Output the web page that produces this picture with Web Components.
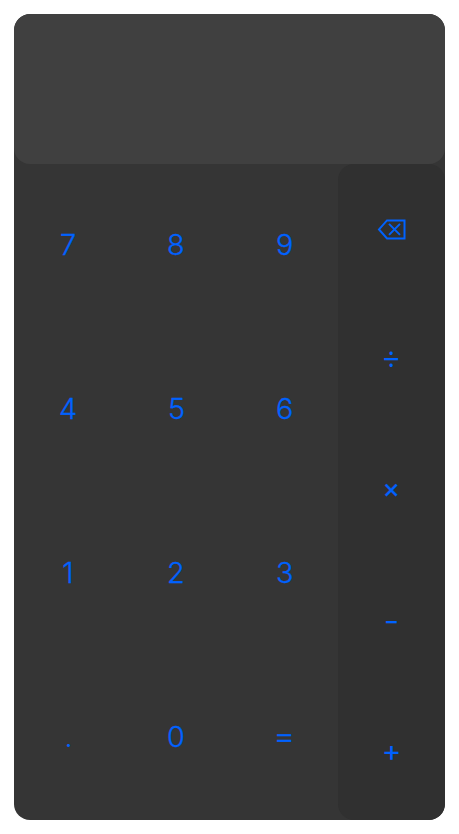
<!DOCTYPE html>
<html lang="en"><head><meta charset="utf-8"><title>Calculator</title>
<style>body{margin:0;background:#fff}</style></head><body>
<calc-app></calc-app>
<script>
class CalcKey extends HTMLElement{
 constructor(){super();this.attachShadow({mode:'open'}).innerHTML=`<style>
 :host{display:flex;align-items:center;justify-content:center;color:#0062ff;font:300 28px/42px Inter,"Liberation Sans",sans-serif;-webkit-text-stroke:.3px #0062ff;cursor:pointer;user-select:none}
 span{display:block;transform:translate(var(--dx,.3px),var(--dy,-1px)) scale(var(--sx,1.03),var(--sy,1))}
 ::slotted(svg){display:block}
 </style><span><slot></slot></span>`}
}
class CalcDisplay extends HTMLElement{
 constructor(){super();this.attachShadow({mode:'open'}).innerHTML=`<style>:host{display:block;height:150px;background:#404040;border-radius:16px}</style><slot></slot>`}
}
class CalcPad extends HTMLElement{
 constructor(){super();this.attachShadow({mode:'open'}).innerHTML=`<style>
 :host{display:grid;grid-template-columns:repeat(3,1fr);grid-template-rows:repeat(4,1fr)}
 :host([ops]){grid-template-columns:1fr;grid-template-rows:repeat(5,1fr);background:#303030;border-radius:16px}
 </style><slot></slot>`}
}
class CalcApp extends HTMLElement{
 constructor(){super();this.attachShadow({mode:'open'}).innerHTML=`<style>
 :host{display:flex;flex-direction:column;box-sizing:border-box;height:834px;padding:14px}
 main{display:flex;flex-direction:column;height:806px;background:#353535;border-radius:16px;overflow:hidden}
 section{flex:1;display:grid;grid-template-columns:324px 107px}
 .dot{--dx:.5px;-webkit-text-stroke-width:0}
 .eq{--sx:1.2;--sy:1;--dy:-2px;--dx:0px}
 .div{--sx:1.12;--sy:1.22;--dy:-4.3px;--dx:0px;-webkit-text-stroke-width:0}
 .mul{--sx:.95;--sy:.95;--dy:-3.5px;--dx:0px;font-weight:400}
 .sub{--sx:1.2;--sy:1;--dy:-2px;--dx:0px;font-weight:400;-webkit-text-stroke-width:0}
 .add{--sx:1.06;--sy:1.06;--dy:-3.7px;--dx:.2px;font-weight:400;-webkit-text-stroke-width:0}
 .del{--dx:0px;--dy:-.6px;--sx:1}
 </style><main><calc-display></calc-display><section>
 <calc-pad><calc-key>7</calc-key><calc-key>8</calc-key><calc-key>9</calc-key><calc-key>4</calc-key><calc-key>5</calc-key><calc-key>6</calc-key><calc-key>1</calc-key><calc-key>2</calc-key><calc-key>3</calc-key><calc-key class="dot">.</calc-key><calc-key>0</calc-key><calc-key class="eq">=</calc-key></calc-pad>
 <calc-pad ops><calc-key class="del" aria-label="Delete"><svg width="30" height="22" viewBox="0 0 30 22" fill="none" stroke="#0062ff" stroke-width="2"><path d="M10 2H27.5V20H10L2 11ZM12 5.5L23 16.5M23 5.5L12 16.5"/></svg></calc-key><calc-key class="div">÷</calc-key><calc-key class="mul">×</calc-key><calc-key class="sub">-</calc-key><calc-key class="add">+</calc-key></calc-pad>
 </section></main>`}
}
customElements.define('calc-key',CalcKey);customElements.define('calc-display',CalcDisplay);customElements.define('calc-pad',CalcPad);customElements.define('calc-app',CalcApp);
</script></body></html>
